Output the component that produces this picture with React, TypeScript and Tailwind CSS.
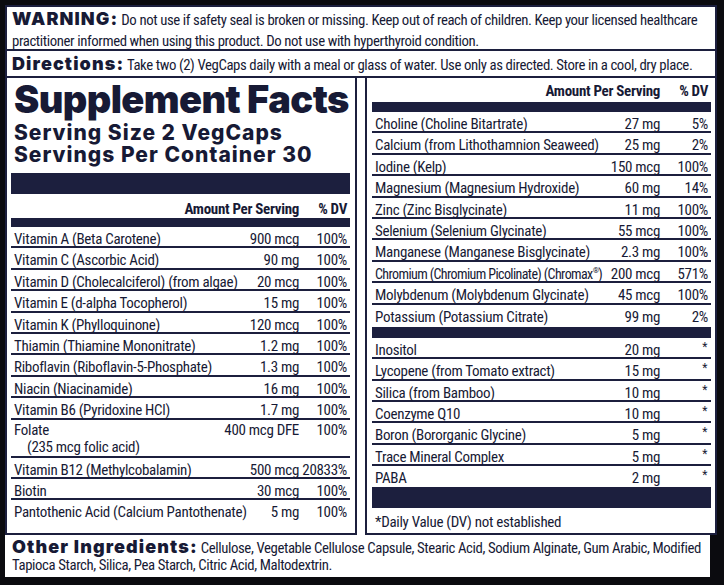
import React from "react";

const NARROW = "font-['Liberation_Sans_Narrow','Roboto_Condensed','DejaVu_Sans_Condensed','Liberation_Sans',sans-serif]";
const HEAVY = "font-['Inter','Lato','Open_Sans',sans-serif]";

type Row = [React.ReactNode, string, string];

const left: Row[] = [
  ["Vitamin A (Beta Carotene)", "900 mcg", "100%"],
  ["Vitamin C (Ascorbic Acid)", "90 mg", "100%"],
  ["Vitamin D (Cholecalciferol) (from algae)", "20 mcg", "100%"],
  ["Vitamin E (d-alpha Tocopherol)", "15 mg", "100%"],
  ["Vitamin K (Phylloquinone)", "120 mcg", "100%"],
  ["Thiamin (Thiamine Mononitrate)", "1.2 mg", "100%"],
  ["Riboflavin (Riboflavin-5-Phosphate)", "1.3 mg", "100%"],
  ["Niacin (Niacinamide)", "16 mg", "100%"],
  ["Vitamin B6 (Pyridoxine HCl)", "1.7 mg", "100%"],
];
const left2: Row[] = [
  ["Vitamin B12 (Methylcobalamin)", "500 mcg", "20833%"],
  ["Biotin", "30 mcg", "100%"],
  ["Pantothenic Acid (Calcium Pantothenate)", "5 mg", "100%"],
];
const right1: Row[] = [
  ["Choline (Choline Bitartrate)", "27 mg", "5%"],
  ["Calcium (from Lithothamnion Seaweed)", "25 mg", "2%"],
  ["Iodine (Kelp)", "150 mcg", "100%"],
  ["Magnesium (Magnesium Hydroxide)", "60 mg", "14%"],
  ["Zinc (Zinc Bisglycinate)", "11 mg", "100%"],
  ["Selenium (Selenium Glycinate)", "55 mcg", "100%"],
  ["Manganese (Manganese Bisglycinate)", "2.3 mg", "100%"],
  [
    <span className="text-[14px] tracking-[-0.6px]">
      Chromium (Chromium Picolinate) (Chromax<span className="align-top text-[8px] leading-[12px]">®</span>)
    </span>,
    "200 mcg",
    "571%",
  ],
  ["Molybdenum (Molybdenum Glycinate)", "45 mcg", "100%"],
  ["Potassium (Potassium Citrate)", "99 mg", "2%"],
];
const right2: Row[] = [
  ["Inositol", "20 mg", "*"],
  ["Lycopene (from Tomato extract)", "15 mg", "*"],
  ["Silica (from Bamboo)", "10 mg", "*"],
  ["Coenzyme Q10", "10 mg", "*"],
  ["Boron (Bororganic Glycine)", "5 mg", "*"],
  ["Trace Mineral Complex", "5 mg", "*"],
  ["PABA", "2 mg", "*"],
];

function FactRow({ r, h, last }: { r: Row; h?: string; last?: boolean }) {
  const star = r[2] === "*";
  return (
    <div
      className={`flex ${h ?? "h-[21.4px]"} pl-[3px] pr-[3px] pt-[3px] leading-[19px] ${last ? "" : "border-b-2 border-[#1c1f3e]"}`}
    >
      <span className="min-w-0 flex-1 whitespace-nowrap">{r[0]}</span>
      <span className="shrink-0 whitespace-nowrap pl-[3px] text-right">{r[1]}</span>
      {star ? (
        <span className="w-[48px] shrink-0 pr-[1px] text-right text-[12px] leading-[12px]">*</span>
      ) : (
        <span className="w-[48px] shrink-0 text-right">{r[2]}</span>
      )}
    </div>
  );
}

function Header({ cls }: { cls: string }) {
  return (
    <div className={`flex justify-end pr-[3px] text-[15px] font-bold leading-[19px] ${cls}`}>
      <span>Amount Per Serving</span>
      <span className="w-[48px] text-right">% DV</span>
    </div>
  );
}

const LABEL = `${HEAVY} text-[18px] font-black tracking-[1.1px]`;

export default function App() {
  return (
    <div className={`h-[585px] w-[724px] overflow-hidden bg-[#0b0b0f] pt-[5px] pl-[5px] text-[#171a35] ${NARROW}`}>
      <div className="w-[712px]">
        {/* Warning */}
        <div className="h-[46px] border-2 border-[#1c1f3e] bg-white px-[5px] pt-[1px] text-[14.8px] leading-[21px] tracking-[-0.4px]">
          <span className={LABEL}>WARNING:</span> Do not use if safety seal is broken or missing. Keep out of reach of children. Keep your licensed healthcare practitioner informed when using this product. Do not use with hyperthyroid condition.
        </div>
        {/* Directions */}
        <div className="h-[27px] border-x-2 border-b-2 border-[#1c1f3e] bg-white px-[5px] pt-[2px] text-[14.8px] leading-[21px] tracking-[-0.4px]">
          <span className={LABEL}>Directions:</span> Take two (2) VegCaps daily with a meal or glass of water. Use only as directed. Store in a cool, dry place.
        </div>
        {/* Panels */}
        <div className="flex h-[457px] gap-[8px] bg-white text-[15px] tracking-[-0.3px]">
          {/* Left panel */}
          <div className="flex w-[352px] shrink-0 flex-col border-x-2 border-b-2 border-[#1c1f3e] pl-[4px] pr-[5px]">
            <div className="pl-[3px] pt-[2px]">
              <div className={`${HEAVY} text-[38px] font-black leading-[38px] tracking-[-0.6px]`}>Supplement Facts</div>
              <div className={`${HEAVY} mt-[4px] text-[21px] font-extrabold leading-[22px] tracking-[1px]`}>Serving Size 2 VegCaps</div>
              <div className={`${HEAVY} text-[21px] font-extrabold leading-[22px] tracking-[1px]`}>Servings Per Container 30</div>
            </div>
            <div className="mt-[7px] h-[21px] shrink-0 bg-[#1c1f3e]" />
            <Header cls="h-[24px] pt-[6px]" />
            <div className="h-[9px] shrink-0 bg-[#1c1f3e]" />
            {left.map((r, i) => (
              <FactRow key={i} r={r} />
            ))}
            <div className="flex h-[38px] flex-col border-b-2 border-[#1c1f3e] pl-[3px] pr-[3px] pt-[2px] leading-[17px]">
              <div className="flex">
                <span className="flex-1">Folate</span>
                <span className="text-right">400 mcg DFE</span>
                <span className="w-[48px] text-right">100%</span>
              </div>
              <div className="pl-[13px]">(235 mcg folic acid)</div>
            </div>
            {left2.map((r, i) => (
              <FactRow key={i} r={r} last={i === left2.length - 1} />
            ))}
          </div>
          {/* Right panel */}
          <div className="flex min-w-0 flex-1 flex-col border-x-2 border-b-2 border-[#1c1f3e] pl-[5px] pr-[4px]">
            <Header cls="h-[24px] pt-[4px]" />
            <div className="h-[10px] shrink-0 bg-[#1c1f3e]" />
            {right1.map((r, i) => (
              <FactRow key={i} r={r} last={i === right1.length - 1} h={i === right1.length - 1 ? "h-[22.4px]" : undefined} />
            ))}
            <div className="h-[11px] shrink-0 bg-[#1c1f3e]" />
            {right2.map((r, i) => (
              <FactRow key={i} r={r} last={i === right2.length - 1} h={i === right2.length - 1 ? "h-[21px]" : undefined} />
            ))}
            <div className="h-[21px] shrink-0 bg-[#1c1f3e]" />
            <div className="pl-[3px] pt-[5px] leading-[19px]">*Daily Value (DV) not established</div>
          </div>
        </div>
        {/* Other ingredients */}
        <div className="mr-[7px] h-[42px] bg-white px-[7px] pt-[3px] text-[14.8px] leading-[17px] tracking-[-0.4px]">
          <span className={LABEL}>Other Ingredients:</span> Cellulose, Vegetable Cellulose Capsule, Stearic Acid, Sodium Alginate, Gum Arabic, Modified Tapioca Starch, Silica, Pea Starch, Citric Acid, Maltodextrin.
        </div>
      </div>
    </div>
  );
}
